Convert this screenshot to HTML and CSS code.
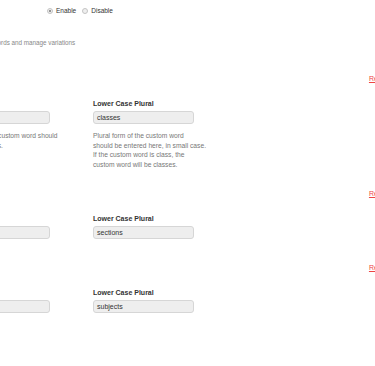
FILE: index.html
```html
<!DOCTYPE html>
<html>
<head>
<meta charset="utf-8">
<link rel="stylesheet" href="styles.css">
</head>
<body>
<div class="page">
  <div class="radios">
    <label class="radio"><span class="dot checked"></span>Enable</label>
    <label class="radio"><span class="dot"></span>Disable</label>
  </div>
  <p class="desc">Add custom words and manage variations</p>

  <section class="word">
    <div class="remove-row"><a class="remove" href="#">Remove</a></div>
    <div class="fields">
      <div class="field">
        <div class="label">Word</div>
        <div class="input">class</div>
        <p class="help">Singular form of custom word should<br>be in small letters.</p>
      </div>
      <div class="field">
        <div class="label">Lower Case Plural</div>
        <div class="input">classes</div>
        <p class="help">Plural form of the custom word<br>should be entered here, in small case.<br>If the custom word is class, the<br>custom word will be classes.</p>
      </div>
    </div>
  </section>

  <section class="word">
    <div class="remove-row"><a class="remove" href="#">Remove</a></div>
    <div class="fields">
      <div class="field">
        <div class="label">Word</div>
        <div class="input">section</div>
      </div>
      <div class="field">
        <div class="label">Lower Case Plural</div>
        <div class="input">sections</div>
      </div>
    </div>
  </section>

  <section class="word">
    <div class="remove-row"><a class="remove" href="#">Remove</a></div>
    <div class="fields">
      <div class="field">
        <div class="label">Word</div>
        <div class="input">subject</div>
      </div>
      <div class="field">
        <div class="label">Lower Case Plural</div>
        <div class="input">subjects</div>
      </div>
    </div>
  </section>
</div>
</body>
</html>
```

FILE: styles.css
```css
html, body {
  margin: 0;
  padding: 0;
  background: #fff;
}
body {
  width: 375px;
  height: 366px;
  overflow: hidden;
  font-family: "Liberation Sans", Arial, sans-serif;
  font-size: 7px;
  color: #333;
}
.page {
  padding-top: 6px;
}
.radios {
  display: flex;
  align-items: center;
  gap: 6px;
  margin-left: 47px;
  height: 9px;
  font-size: 6.5px;
}
.radio {
  display: flex;
  align-items: center;
  gap: 3px;
  color: #333;
}
.dot {
  width: 6px;
  height: 6px;
  border-radius: 50%;
  border: 1px solid #c4c4c4;
  background: #efefef;
  box-sizing: border-box;
  position: relative;
}
.dot.checked::after {
  content: "";
  position: absolute;
  left: 1px;
  top: 1px;
  width: 2px;
  height: 2px;
  border-radius: 50%;
  background: #777;
}
.desc {
  margin: 23px 0 0 -42px;
  color: #888;
  line-height: 9px;
  font-size: 6.3px;
  white-space: nowrap;
}
.word {
  margin-top: 27px;
}
.word + .word {
  margin-top: 24px;
}
.remove-row {
  display: flex;
  justify-content: flex-end;
  margin-right: -20px;
  line-height: 9px;
}
.remove {
  color: #e44;
  text-decoration: underline;
}
.fields {
  display: grid;
  grid-template-columns: 113px 113px;
  column-gap: 31px;
  margin-left: -51px;
  margin-top: 16px;
}
.label {
  font-weight: bold;
  color: #333;
  line-height: 9px;
  margin-bottom: 3px;
  white-space: nowrap;
}
.input {
  width: 101px;
  height: 13px;
  box-sizing: border-box;
  border: 1px solid #d6d6d6;
  border-radius: 3px;
  background: #eee;
  padding: 0 3px;
  line-height: 11px;
  color: #333;
}
.help {
  margin: 7px 0 -4px;
  color: #777;
  font-size: 6.7px;
  line-height: 9.5px;
  white-space: nowrap;
}
```
